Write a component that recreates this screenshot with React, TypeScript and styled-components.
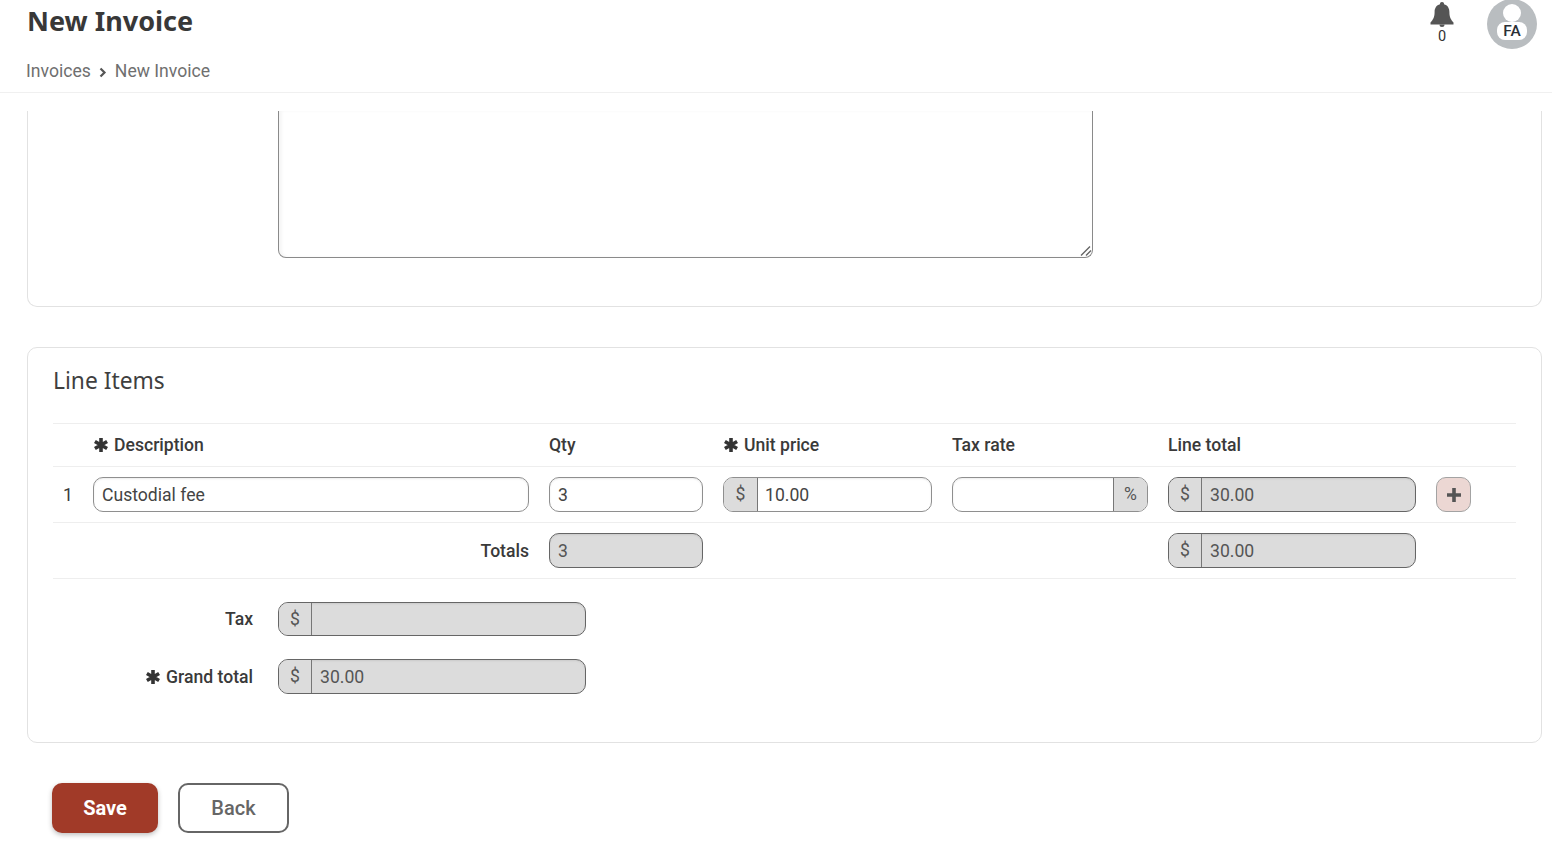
import React from 'react';
import styled, { createGlobalStyle } from 'styled-components';

const GlobalStyle = createGlobalStyle`
  html, body {
    margin: 0;
    height: 100%;
    overflow: hidden;
    background: #fff;
  }
  body {
    font-family: Roboto, "Liberation Sans", sans-serif;
    font-size: 17.6px;
    color: #3b3b3b;
  }
  * {
    box-sizing: border-box;
  }
`;

const Page = styled.div`
  display: flex;
  flex-direction: column;
  height: 842px;
  overflow: hidden;
`;

const Header = styled.header`
  flex: none;
  display: flex;
  justify-content: space-between;
  height: 93px;
  padding: 0 15px 0 26px;
  border-bottom: 1px solid #f0f0f0;
`;

const Title = styled.h1`
  margin: 0 0 0 1px;
  font-family: "Noto Sans", sans-serif;
  font-size: 27px;
  line-height: 42px;
  font-weight: 700;
  color: #383838;
`;

const Crumbs = styled.nav`
  display: flex;
  align-items: center;
  margin-top: 18px;
  font-size: 17.6px;
  line-height: 22px;
  color: #6f6f6f;
`;

const HeaderTools = styled.div`
  display: flex;
  align-items: flex-start;
  gap: 33px;
`;

const Bell = styled.div`
  display: flex;
  flex-direction: column;
  align-items: center;
  width: 24px;
  margin-top: 2px;
  font-size: 14.5px;
  line-height: 16px;
  color: #333;
`;

const Avatar = styled.div`
  position: relative;
  width: 50px;
  height: 50px;
  margin-top: -1px;
  overflow: hidden;
  border-radius: 50%;
  background: #b9bdc0;
`;

const AvatarHead = styled.div`
  position: absolute;
  top: 5px;
  left: 16px;
  width: 18px;
  height: 18px;
  border-radius: 50%;
  background: #fff;
`;

const AvatarBody = styled.div`
  position: absolute;
  top: 23px;
  left: 10px;
  width: 30px;
  height: 18px;
  border-radius: 8px;
  background: #fff;
  font-size: 15.5px;
  font-weight: 500;
  line-height: 18px;
  text-align: center;
  color: #2b2f36;
`;

const Content = styled.main`
  flex: 1;
  min-height: 0;
  overflow: hidden;
  padding: 18px 10px 0 27px;
`;

const NotesCard = styled.section`
  height: 196px;
  padding-left: 250px;
  border: 1px solid #e2e2e2;
  border-top: 0;
  border-radius: 0 0 10px 10px;
`;

const NotesBox = styled.div`
  position: relative;
  width: 815px;
  height: 147px;
  border: 1px solid #8a8a8a;
  border-top: 0;
  border-radius: 0 0 8px 8px;
  box-shadow: inset 3px 0 3px rgba(0, 0, 0, 0.04);
`;

const Grip = styled.svg`
  position: absolute;
  right: 0;
  bottom: 0;
`;

const ItemsCard = styled.section`
  height: 396px;
  margin-top: 40px;
  padding: 0 25px;
  border: 1px solid #e2e2e2;
  border-radius: 10px;
`;

const CardTitle = styled.h2`
  margin: 0;
  height: 75px;
  padding-top: 16px;
  font-family: "Noto Sans", sans-serif;
  font-size: 22.8px;
  line-height: 34px;
  font-weight: 400;
  color: #3f3f3f;
`;

const Row = styled.div`
  display: grid;
  grid-template-columns: 20px 436px 154px 209px 196px 248px 35px;
  column-gap: 20px;
  align-items: center;
  height: 56px;
  border-top: 1px solid #eeeeee;
`;

const HeadRow = styled(Row)`
  height: 43px;
`;

const ColHead = styled.div<{ $col: number }>`
  display: flex;
  align-items: center;
  grid-column: ${(p) => p.$col};
  font-size: 17.6px;
  font-weight: 500;
  color: #3a3a3a;
  white-space: nowrap;
`;

const RowNum = styled.div`
  padding-left: 10px;
  font-size: 17.6px;
  color: #3a3a3a;
`;

const TotalsLabel = styled.div`
  grid-column: 2;
  text-align: right;
  font-size: 17.6px;
  font-weight: 500;
  color: #3a3a3a;
`;

const Star = styled.svg`
  flex: none;
  margin-right: 5px;
`;

const Field = styled.div<{ $col?: number; $disabled?: boolean; $height?: number }>`
  display: flex;
  height: ${(p) => p.$height || 35}px;
  ${(p) => (p.$col ? `grid-column: ${p.$col};` : '')}
  overflow: hidden;
  border: 1px solid ${(p) => (p.$disabled ? '#666666' : '#8f8f8f')};
  border-radius: 10px;
  background: ${(p) => (p.$disabled ? '#dcdcdc' : '#ffffff')};
  box-shadow: inset 0 1px 2px rgba(0, 0, 0, 0.08);
`;

const FieldText = styled.div<{ $muted?: boolean; $pad?: number }>`
  flex: 1;
  padding: 1px 0 0 ${(p) => p.$pad || 8}px;
  font-size: 17.6px;
  line-height: 33px;
  color: ${(p) => (p.$muted ? '#555555' : '#444444')};
`;

const Addon = styled.div<{ $side: 'left' | 'right'; $width?: number }>`
  flex: none;
  width: ${(p) => p.$width || 33}px;
  ${(p) => (p.$side === 'left' ? 'border-right' : 'border-left')}: 1px solid #777777;
  background: #dcdcdc;
  font-size: 17.6px;
  line-height: 33px;
  text-align: center;
  color: #555555;
`;

const AddButton = styled.button`
  display: flex;
  align-items: center;
  justify-content: center;
  width: 35px;
  height: 35px;
  padding: 0;
  border: 1px solid #a3a3a3;
  border-radius: 10px;
  background: #ecd7d3;
`;

const SummaryRows = styled.div`
  display: flex;
  flex-direction: column;
  gap: 23px;
  padding-top: 23px;
  border-top: 1px solid #eeeeee;
`;

const SummaryRow = styled.div`
  display: grid;
  grid-template-columns: 200px 308px;
  column-gap: 25px;
  align-items: center;
`;

const SummaryLabel = styled.div`
  display: flex;
  align-items: center;
  justify-content: flex-end;
  font-size: 17.6px;
  font-weight: 500;
  color: #3a3a3a;
`;

const Actions = styled.div`
  display: flex;
  gap: 20px;
  margin-top: 40px;
  padding-left: 25px;
`;

const SaveButton = styled.button`
  width: 106px;
  height: 50px;
  border: 0;
  border-radius: 10px;
  background: #a13a28;
  box-shadow: 0 2px 5px rgba(0, 0, 0, 0.25);
  font-family: Roboto, sans-serif;
  font-size: 20px;
  font-weight: 700;
  color: #fff;
`;

const BackButton = styled.button`
  width: 111px;
  height: 50px;
  border: 2px solid #666666;
  border-radius: 10px;
  background: #fff;
  font-family: Roboto, sans-serif;
  font-size: 20px;
  font-weight: 500;
  color: #666666;
`;

const Required = () => (
  <Star width="16" height="16" viewBox="0 0 16 16">
    <path d="M8 1v14M1.900 4.500l12.200 7M14.100 4.500l-12.200 7" stroke="#333" strokeWidth="3.600" fill="none" />
  </Star>
);

const App: React.FC = () => {
  return (
    <Page>
      <GlobalStyle />
      <Header>
        <div>
          <Title>New Invoice</Title>
          <Crumbs>
            Invoices
            <svg width="24" height="14" viewBox="0 0 24 14">
              <path d="M9.500 4.500l4 4-4 4" fill="none" stroke="#555" strokeWidth="2.200" />
            </svg>
            New Invoice
          </Crumbs>
        </div>
        <HeaderTools>
          <Bell>
            <svg width="24" height="27" viewBox="0 0 24 27">
              <path
                d="M12 0a2 2 0 0 1 2 2.300c3.600.9 5.400 4 5.400 7.700 0 5.500 1.600 7.600 4.100 10.500v2H.5v-2C3 17.600 4.600 15.500 4.600 10c0-3.700 1.800-6.800 5.400-7.700A2 2 0 0 1 12 0z"
                fill="#555"
              />
              <path d="M9.500 22.500h5a2.500 2.500 0 0 1-5 0z" fill="#555" />
            </svg>
            <span>0</span>
          </Bell>
          <Avatar>
            <AvatarHead />
            <AvatarBody>FA</AvatarBody>
          </Avatar>
        </HeaderTools>
      </Header>
      <Content>
        <NotesCard>
          <NotesBox>
            <Grip width="12" height="12" viewBox="0 0 12 12">
              <path d="M1 10.500L10 1.500M6 10.500l5-5" stroke="#666" strokeWidth="1.400" fill="none" />
            </Grip>
          </NotesBox>
        </NotesCard>
        <ItemsCard>
          <CardTitle>Line Items</CardTitle>
          <HeadRow>
            <ColHead $col={2}>
              <Required />
              Description
            </ColHead>
            <ColHead $col={3}>Qty</ColHead>
            <ColHead $col={4}>
              <Required />
              Unit price
            </ColHead>
            <ColHead $col={5}>Tax rate</ColHead>
            <ColHead $col={6}>Line total</ColHead>
          </HeadRow>
          <Row>
            <RowNum>1</RowNum>
            <Field>
              <FieldText>Custodial fee</FieldText>
            </Field>
            <Field>
              <FieldText>3</FieldText>
            </Field>
            <Field>
              <Addon $side="left" $width={34}>$</Addon>
              <FieldText $pad={7}>10.00</FieldText>
            </Field>
            <Field>
              <FieldText />
              <Addon $side="right" $width={34}>%</Addon>
            </Field>
            <Field $disabled>
              <Addon $side="left">$</Addon>
              <FieldText $muted>30.00</FieldText>
            </Field>
            <AddButton>
              <svg width="16" height="16" viewBox="0 0 16 16">
                <path d="M8 1v14M1 8h14" stroke="#555" strokeWidth="3.600" />
              </svg>
            </AddButton>
          </Row>
          <Row>
            <TotalsLabel>Totals</TotalsLabel>
            <Field $col={3} $disabled>
              <FieldText $muted>3</FieldText>
            </Field>
            <Field $col={6} $disabled>
              <Addon $side="left">$</Addon>
              <FieldText $muted>30.00</FieldText>
            </Field>
          </Row>
          <SummaryRows>
            <SummaryRow>
              <SummaryLabel>Tax</SummaryLabel>
              <Field $disabled $height={34}>
                <Addon $side="left">$</Addon>
                <FieldText $muted />
              </Field>
            </SummaryRow>
            <SummaryRow>
              <SummaryLabel>
                <Required />
                Grand total
              </SummaryLabel>
              <Field $disabled>
                <Addon $side="left">$</Addon>
                <FieldText $muted>30.00</FieldText>
              </Field>
            </SummaryRow>
          </SummaryRows>
        </ItemsCard>
        <Actions>
          <SaveButton>Save</SaveButton>
          <BackButton>Back</BackButton>
        </Actions>
      </Content>
    </Page>
  );
};

export default App;
